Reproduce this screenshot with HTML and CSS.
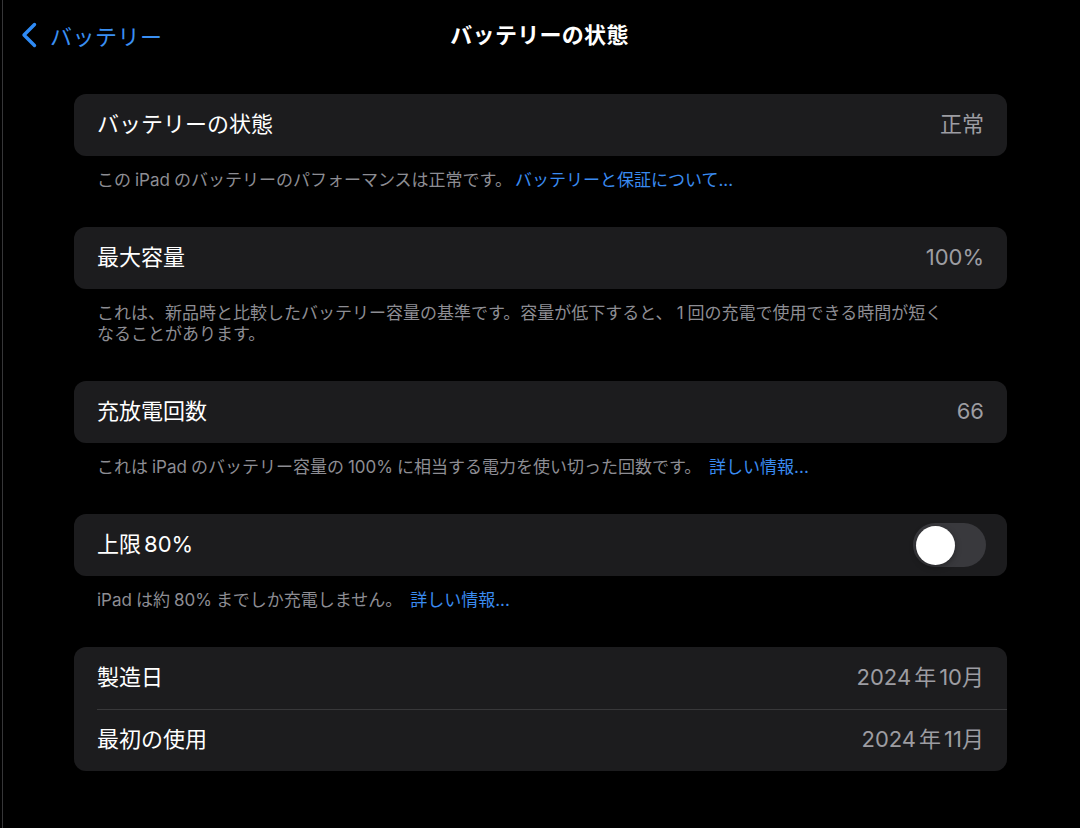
FILE: index.html
```html
<!DOCTYPE html>
<html lang="ja">
<head>
<meta charset="utf-8">
<title>バッテリーの状態</title>
<link rel="stylesheet" href="styles.css">
</head>
<body>
<div class="screen">
  <header class="navbar">
    <div class="back">
      <svg class="chev" width="18" height="26" viewBox="0 0 18 26"><path d="M14.5 2.5 L4 13 L14.5 23.5" fill="none" stroke="#2f8bf5" stroke-width="3.4" stroke-linecap="round" stroke-linejoin="round"/></svg>
      <span class="back-label">バッテリー</span>
    </div>
    <h1 class="title">バッテリーの状態</h1>
  </header>

  <main class="content">
    <section class="group">
      <div class="card">
        <div class="row"><span class="label">バッテリーの状態</span><span class="value">正常</span></div>
      </div>
      <p class="footer">この<span class="lat">iPad</span>のバッテリーのパフォーマンスは正常です。<a class="link">バッテリーと保証について...</a></p>
    </section>

    <section class="group">
      <div class="card">
        <div class="row"><span class="label">最大容量</span><span class="value lat-val">100%</span></div>
      </div>
      <p class="footer">これは、新品時と比較したバッテリー容量の基準です。容量が低下すると、<span class="lat">1</span>回の充電で使用できる時間が短く<br>なることがあります。</p>
    </section>

    <section class="group">
      <div class="card">
        <div class="row"><span class="label">充放電回数</span><span class="value lat-val">66</span></div>
      </div>
      <p class="footer">これは<span class="lat">iPad</span>のバッテリー容量の<span class="lat">100%</span>に相当する電力を使い切った回数です。 <a class="link">詳しい情報...</a></p>
    </section>

    <section class="group">
      <div class="card">
        <div class="row"><span class="label">上限<span class="lat">80%</span></span><span class="toggle"><span class="knob"></span></span></div>
      </div>
      <p class="footer"><span class="lat first">iPad</span>は約<span class="lat">80%</span>までしか充電しません。 <a class="link">詳しい情報...</a></p>
    </section>

    <section class="group">
      <div class="card">
        <div class="row"><span class="label">製造日</span><span class="value"><span class="lat-val">2024</span><span class="gap"></span>年<span class="gap"></span><span class="lat-val">10</span>月</span></div>
        <div class="row divided"><span class="label">最初の使用</span><span class="value"><span class="lat-val">2024</span><span class="gap"></span>年<span class="gap"></span><span class="lat-val">11</span>月</span></div>
      </div>
    </section>
  </main>
</div>
</body>
</html>
```

FILE: styles.css
```css
* { box-sizing: border-box; }

html, body {
  margin: 0;
  padding: 0;
  background: #000;
  height: 100%;
}

body {
  font-family: "Inter", "Noto Sans CJK JP", sans-serif;
  color: #fff;
}

.screen {
  margin-left: 2px;
  border-left: 1px solid #363638;
  min-height: 828px;
  width: 1078px;
}

.navbar {
  position: relative;
  height: 68px;
  display: flex;
  align-items: center;
}

.back {
  display: flex;
  align-items: center;
  padding-left: 17px;
  padding-top: 1px;
  gap: 12px;
  color: #2f8bf5;
}

.chev { display: block; }

.back-label {
  font-family: "Noto Sans CJK JP", sans-serif;
  font-size: 22px;
  line-height: 26px;
  letter-spacing: 0.5px;
  color: #3a8ff2;
}

.title {
  position: absolute;
  left: 0;
  right: 0;
  top: 0;
  margin: 0;
  height: 68px;
  line-height: 66px;
  text-align: center;
  font-family: "Noto Sans CJK JP", sans-serif;
  font-size: 22px;
  font-weight: 700;
  letter-spacing: 0.3px;
  padding-right: 4px;
  pointer-events: none;
}

.content {
  width: 933px;
  margin-left: 71px;
  padding-top: 26px;
  display: flex;
  flex-direction: column;
  gap: 36px;
}

.group { display: block; }

.card {
  background: #1c1c1e;
  border-radius: 12px;
  overflow: hidden;
}

.row {
  height: 62px;
  display: flex;
  align-items: center;
  justify-content: space-between;
  padding: 0 23px 0 23px;
  position: relative;
}

.row.divided::before {
  content: "";
  position: absolute;
  left: 23px;
  right: 0;
  top: 0;
  height: 1px;
  background: #38383a;
}

.label {
  font-size: 22px;
  line-height: 28px;
  color: #fff;
  padding-bottom: 2px;
}

.label .lat { margin-left: 3px; }

.value {
  font-size: 22px;
  line-height: 28px;
  color: #9d9da2;
  padding-bottom: 2px;
}

.gap { display: inline-block; width: 3px; }

.footer {
  margin: 0;
  padding: 14px 40px 0 23px;
  font-size: 17px;
  line-height: 21px;
  color: #8d8d93;
}

.footer .lat { margin: 0 4px; }
.lat { margin: 0 3px; }
.footer .lat.first { margin-left: 0; }

.link {
  color: #3a8bf0;
  text-decoration: none;
  margin-left: 3px;
}

.toggle {
  width: 73px;
  height: 44px;
  border-radius: 22px;
  background: #39393d;
  position: relative;
  margin-right: -2px;
}

.knob {
  position: absolute;
  left: 3px;
  top: 2.5px;
  width: 39px;
  height: 39px;
  border-radius: 50%;
  background: #fff;
  box-shadow: 0 2px 6px rgba(0,0,0,0.35);
}
```
